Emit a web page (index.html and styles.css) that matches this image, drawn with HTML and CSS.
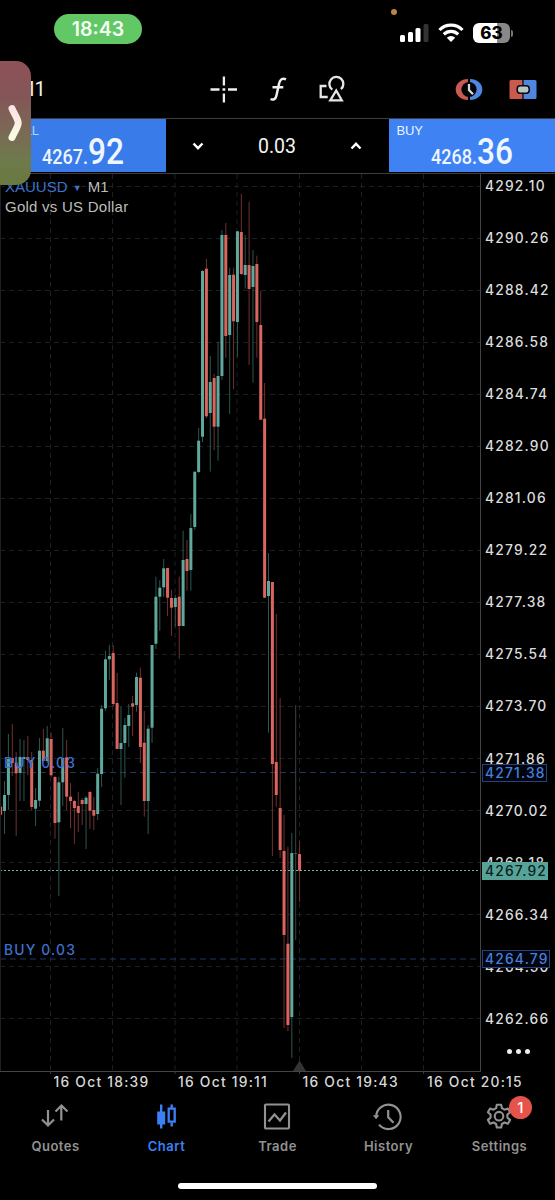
FILE: index.html
```html
<!DOCTYPE html>
<html lang="en">
<head>
<meta charset="utf-8">
<title>XAUUSD Chart</title>
<link rel="stylesheet" href="styles.css">
</head>
<body>
<div class="app">
  <header class="status">
    <div class="status-time">18:43</div>
    <span class="status-dot"></span>
    <div class="status-icons">
      <svg class="ic-signal" width="29" height="20" viewBox="0 0 29 20"><g fill="#fff"><rect x="0" y="12" width="5" height="7" rx="1.5"/><rect x="8" y="9" width="5" height="10" rx="1.5"/><rect x="15.500" y="5" width="5" height="14" rx="1.500"/></g><rect x="23.500" y="1" width="5" height="18" rx="1.500" fill="#333"/></svg>
      <svg class="ic-wifi" width="26" height="20" viewBox="0 0 26 20"><g fill="none" stroke="#fff" stroke-width="3.200"><path d="M1.500 7A16 16 0 0 1 24.500 7"/><path d="M5.800 11.400A10.200 10.200 0 0 1 20.200 11.400"/></g><path d="M8.800 14.700a6 6 0 0 1 8.400 0L13 19z" fill="#fff"/></svg>
      <div class="battery"><span>63</span></div><i class="battery-tip"></i>
    </div>
  </header>

  <nav class="toolbar">
    <div class="timeframe">M1</div>
    <div class="tools">
      <svg width="54" height="32" viewBox="0 0 54 32"><path d="M13.500 16.500h9M31 16.500h9M26.900 3.500v9M26.900 20.500v9M25.500 16.500h2.800" stroke="#eee" stroke-width="2.300" fill="none"/></svg>
      <svg width="54" height="32" viewBox="0 0 54 32"><path d="M35 6.300c-3.600-1.600-6 .2-6.900 4.200l-2.700 12.200c-.7 3.300-2.900 4.600-5.900 3.500M21.500 14.300h10.800" stroke="#eee" stroke-width="2.500" fill="none"/></svg>
      <svg width="54" height="32" viewBox="0 0 54 32"><g stroke="#e6e6e6" stroke-width="2.300" fill="none"><path d="M21.500 13h-5.800v11h7"/><path d="M27.300 16.600a7 7 0 1 1 8.600-.4"/><path d="M31.200 17.500l-5.900 9.800h11.500z"/></g></svg>
    </div>
    <div class="modes">
      <svg width="54" height="32" viewBox="0 0 54 32"><path d="M26 6C19 6 13.700 10.500 13.700 16.500S19 27 26 27z" fill="#c95a50"/><path d="M28 6c7 0 12.300 4.500 12.300 10.500S35 27 28 27z" fill="#4f86e0"/><circle cx="27" cy="16.500" r="7.600" fill="#030405"/><path d="M27 11v6l4 4.300" fill="none" stroke="#d4dbdd" stroke-width="2.200"/></svg>
      <svg width="54" height="32" viewBox="0 0 54 32"><path d="M26.400 7H15a1.500 1.500 0 0 0-1.500 1.500v16a1.500 1.500 0 0 0 1.500 1.500h11.400z" fill="#c95a50"/><path d="M27.600 7H39a1.500 1.500 0 0 1 1.500 1.500v16a1.500 1.500 0 0 1-1.500 1.500H27.600z" fill="#4f86e0"/><rect x="21.200" y="12.700" width="12" height="7.600" rx="3" fill="#b9c4c5" stroke="#050708" stroke-width="1.500"/></svg>
    </div>
  </nav>

  <section class="trade">
    <div class="side sell"><span class="side-label">SELL</span>
      <svg width="86" height="33" viewBox="0 0 86 33"><text class="price-s" x="0" y="27" textLength="46" lengthAdjust="spacingAndGlyphs">4267.</text><text class="price-l" x="46" y="27" textLength="36" lengthAdjust="spacingAndGlyphs">92</text></svg>
    </div>
    <div class="volume">
      <svg width="14" height="12" viewBox="0 0 14 12"><path d="M2.500 3.500L7 8.200l4.500-4.700" fill="none" stroke="#fff" stroke-width="2.400"/></svg>
      <span>0.03</span>
      <svg width="14" height="12" viewBox="0 0 14 12"><path d="M2.500 8.500L7 3.800l4.500 4.700" fill="none" stroke="#fff" stroke-width="2.400"/></svg>
    </div>
    <div class="side buy"><span class="side-label">BUY</span>
      <svg width="86" height="33" viewBox="0 0 86 33"><text class="price-s" x="0" y="27" textLength="46" lengthAdjust="spacingAndGlyphs">4268.</text><text class="price-l" x="46" y="27" textLength="36" lengthAdjust="spacingAndGlyphs">36</text></svg>
    </div>
  </section>

  <main class="chart">
    <svg class="plot" id="plot" width="481" height="902" viewBox="0 173 481 902"></svg>
    <div class="scale" id="scale"></div>
    <div class="caption"><div><b>XAUUSD <i>▼</i></b> M1</div><div class="caption-name">Gold vs US Dollar</div></div>
    <span class="tag tag-order tag-a">4271.38</span>
    <span class="tag tag-bid">4267.92</span>
    <span class="tag tag-order tag-b">4264.79</span>
    <span class="order order-a">BUY 0.03</span>
    <span class="order order-b">BUY 0.03</span>
    <span class="more"><i></i><i></i><i></i></span>
  </main>

  <div class="times"><span>16 Oct 18:39</span><span>16 Oct 19:11</span><span>16 Oct 19:43</span><span>16 Oct 20:15</span></div>

  <footer class="tabs">
    <div class="tab"><svg width="32" height="32" viewBox="0 0 32 32"><path d="M9 8v15M3 17.500l6 6 6-6M22.300 18.500V4M16.500 9.500l6-6 6 6" fill="none" stroke="currentColor" stroke-width="2.200"/></svg><span>Quotes</span></div>
    <div class="tab active"><svg width="32" height="32" viewBox="0 0 32 32"><path d="M11.200 2.500v24M21.700 2.500v4M21.700 20.500v4" stroke="currentColor" stroke-width="2.400"/><path d="M7.200 9.500h8v13h-8z" fill="currentColor"/><path d="M18.700 6.700h6v13h-6z" fill="none" stroke="currentColor" stroke-width="2.300"/></svg><span>Chart</span></div>
    <div class="tab"><svg width="32" height="32" viewBox="0 0 32 32"><rect x="4" y="2.500" width="24" height="24" rx="1" fill="none" stroke="currentColor" stroke-width="2.100"/><path d="M7.500 19.500l6-7 5.500 6 6-8" fill="none" stroke="currentColor" stroke-width="2.200"/></svg><span>Trade</span></div>
    <div class="tab"><svg width="32" height="32" viewBox="0 0 32 32"><path d="M4.200 15A12.200 12.200 0 1 1 7 22.600" fill="none" stroke="currentColor" stroke-width="2.200"/><path d="M.8 13.200h6.600l-3.300 4z" fill="currentColor"/><path d="M16.200 8v7.200l5.300 5.600" fill="none" stroke="currentColor" stroke-width="2.200"/></svg><span>History</span></div>
    <div class="tab"><svg width="32" height="32" viewBox="0 0 32 32"><g fill="none" stroke="currentColor" stroke-width="2.100" stroke-linejoin="round"><path d="M13.800 2.700h4.400l.7 3.500 2.600 1.500 3.400-1.200 2.200 3.800-2.700 2.300v3l2.700 2.300-2.200 3.800-3.400-1.200-2.600 1.500-.7 3.500h-4.400l-.7-3.500-2.600-1.500-3.400 1.200-2.200-3.800 2.700-2.300v-3l-2.700-2.300 2.200-3.800 3.400 1.200 2.600-1.500z"/><circle cx="16" cy="14.200" r="4.300"/></g></svg><span>Settings</span><em class="badge">1</em></div>
  </footer>
  <div class="home"></div>

  <aside class="handle"><svg width="16" height="38" viewBox="0 0 16 38"><defs><linearGradient id="hg" x1="0" y1="0" x2="0" y2="1"><stop offset="0" stop-color="#fbe3e6"/><stop offset="1" stop-color="#fafbe4"/></linearGradient></defs><path d="M5 4.500C6.700 9 11.200 15 11.200 19S6.700 29 5 33.500" fill="none" stroke="url(#hg)" stroke-width="7" stroke-linecap="round"/></svg></aside>
</div>
<script src="app.js"></script>
</body>
</html>
```

FILE: styles.css
```css
* { box-sizing: border-box; }
body { margin: 0; background: #000; color: #ddd; font-family: Inter, "Liberation Sans", sans-serif; }
svg { display: block; flex: none; }
.app { position: relative; width: 555px; height: 1200px; overflow: hidden; background: #000; display: flex; flex-direction: column; }

.status { position: relative; height: 60px; display: flex; justify-content: space-between; align-items: flex-start; padding: 14px 42px 0 54px; }
.status-time { width: 88px; height: 30px; border-radius: 15px; background: #62c866; color: #f4fff4; font-size: 19.500px; font-weight: 600; line-height: 31px; text-align: center; }
.status-dot { position: absolute; left: 391px; top: 9px; width: 6px; height: 6px; border-radius: 50%; background: #b98542; }
.status-icons { display: flex; align-items: center; padding-top: 9px; }
.ic-wifi { margin-left: 9px; }
.battery { width: 37px; height: 20px; margin-left: 9px; border-radius: 6px; background: linear-gradient(90deg, #fff 65%, #888 65%); color: #000; font-size: 17px; font-weight: 800; line-height: 20px; text-align: center; }
.battery-tip { width: 2px; height: 7px; margin-left: 1px; border-radius: 0 2px 2px 0; background: #777; }

.toolbar { height: 58px; display: grid; grid-template-columns: 196.5px 1fr auto; align-items: center; padding: 0 5.500px 0 0; }
.timeframe { padding-left: 17px; color: #eee; font-size: 20px; line-height: 24px; font-family: Roboto, sans-serif; }
.tools, .modes { display: flex; }

.trade { height: 56px; display: grid; grid-template: 53px / 166px 1fr 166px; border-top: 1px solid #3d3d3d; border-bottom: 1px solid #3d3d3d; }
.side { display: flex; flex-direction: column; padding: 5px 0 0 7.500px; color: #eaf3ff; background: #3f82f4; }
.sell { background: #397be9; }
.side-label { height: 14px; font-family: "Liberation Sans", sans-serif; font-size: 13px; line-height: 14px; letter-spacing: -.1px; }
.side svg { margin: -1px 0 0 34px; overflow: visible; }
.sell .side-label { color: #b7d2fc; }
.price-s { font: 500 20px Roboto, sans-serif; fill: #eef6ff; }
.price-l { font: 500 36.500px Roboto, sans-serif; fill: #eef6ff; }
.volume { display: flex; align-items: center; justify-content: space-between; padding: 1px 26px 0 25px; color: #f4f4f4; font: 19.500px Roboto, sans-serif; }

.chart { position: relative; height: 899px; display: flex; }
.plot { margin-top: -1px; }
.scale { width: 74px; padding: 13px 0 0 4px; margin-top: -27px; font-size: 13.800px; letter-spacing: 1.200px; color: #dcdcdc; font-weight: 500; }
.scale div { height: 52.060px; display: flex; align-items: center; }
.caption { position: absolute; left: 5px; top: 3px; font: 15px/19px "Liberation Sans", sans-serif; color: #bdbdbd; }
.caption b { font-weight: 400; color: #3d73cc; }
.caption i { font-style: normal; font-size: 9px; vertical-align: 1px; margin: 0 2px 0 1px; }
.caption-name { margin-top: -1px; letter-spacing: .25px; }
.tag { position: absolute; left: 482px; height: 18px; padding: 0 1px 0 3px; font-size: 13.800px; font-weight: 500; line-height: 18px; letter-spacing: 1.200px; }
.tag-order { border: 1px solid #24427e; background: #02050d; color: #4580df; line-height: 17px; padding: 0 0 0 2px; }
.tag-bid { top: 687.500px; background: #58a398; color: #06221e; }
.tag-a { top: 590px; }
.tag-b { top: 776px; }
.order { position: absolute; left: 4px; color: #3c71cf; font-size: 13.800px; font-weight: 500; line-height: 16px; letter-spacing: 1.200px; }
.order-a { top: 581px; }
.order-b { top: 768px; }
.more { position: absolute; left: 507px; top: 875px; display: flex; gap: 4px; }
.more i { width: 5px; height: 5px; border-radius: 50%; background: #eee; }

.times { height: 20px; display: grid; grid-template-columns: repeat(4, 124.500px); padding: 1px 0 0 53.500px; font-size: 13.800px; font-weight: 500; line-height: 16px; letter-spacing: 1.250px; color: #d8d8d8; white-space: nowrap; }

.tabs { height: 83px; display: grid; grid-template-columns: repeat(5, 1fr); padding-top: 9px; }
.tab { position: relative; display: flex; flex-direction: column; align-items: center; color: #929292; font-size: 13px; font-weight: 600; line-height: 16px; letter-spacing: .5px; }
.tab svg { margin-right: 1px; }
.tab span { margin-top: 4px; }
.active { color: #3b80f6; }
.badge { position: absolute; left: 65px; top: -6px; width: 23px; height: 23px; border-radius: 50%; background: #e6534b; color: #fff; font: 500 15px/23px Inter, sans-serif; text-align: center; }
.home { width: 199px; height: 6px; margin: 7px auto 0; border-radius: 3px; background: #fff; }
.handle { position: absolute; left: 0; top: 61px; width: 31px; height: 124px; border-radius: 0 15px 15px 0; background: linear-gradient(#8e5157, #845657 30%, #7b6855 55%, #6e7a4c 80%, #69793f); display: flex; align-items: center; padding-left: 7px; }
```

FILE: app.js
```js
// Each candle: [direction, high, bodyTop, bodyBottom, low] in chart coordinates.
const candles = [
  ['r',803,806.7,814.7,816],['g',781,795,811,834],['g',734,759,795,810],['r',724,758,763,776],
  ['r',752,762.7,773.3,836],['g',739,757,773,801],['g',740,757,759,801],['r',736,757,760,775],
  ['r',752,760,807,810],['g',788,800,808.7,826],['g',738,750.7,800.7,806.7],['r',729,750.7,761,763],
  ['g',726,738.3,761,763],['r',733,739,775.3,777],['r',776,777,823,838.7],['g',776.7,782.3,822.3,896],
  ['g',728,758,782.3,806],['r',740,757.3,796.7,810],['r',783,796.7,801,828],['r',800,801,808,844],
  ['r',792,806,813,832],['r',798,800,804,825],['g',796,797.7,804,849],['r',791,792,810.7,829],
  ['r',797,810,815.7,830],['g',768,773.7,814,820],['g',705,708.7,774,787],['g',650.7,659.3,708.3,711],
  ['g',645,656,659.3,680],['r',645,653,704,706.7],['r',673,703,749,749],['g',706.7,743,749,805],
  ['g',718,725,743,777.7],['g',704,715,726,747],['r',696,703.3,706.7,736],['g',672.7,677,705,711.7],
  ['r',667.7,677.7,747,763],['r',711,742.7,801,816.7],['g',725,728.7,801,834],['g',645,645,727.7,743],
  ['g',576.7,596.7,643.7,649],['g',580,587.7,596.7,630.7],['g',559,568.3,587.3,597],['r',568,568,597.7,616],
  ['r',590,598,607.7,636],['g',594.7,598,607,626.7],['r',576.7,596.7,626,658.7],['g',530.7,560,626,626],
  ['r',540,559,571,590.7],['g',514,528,570,590.7],['g',471.7,471.7,527,530],['g',428,440.7,472,473],
  ['g',270,271,436.7,442],['r',259,268.7,416.3,418],['g',356,382,413,471.7],['r',374,378,426.7,450],
  ['g',341.7,376,426.7,460.7],['g',230,235,376,380],['r',223,235,336,358],['g',267.7,275,335,414],
  ['r',267.7,274.7,321.3,389],['g',231,231.3,322,357],['r',193.7,232,274,275],['g',235,265,275,288.7],
  ['r',201.7,265,289,365],['g',250,266,287,382.7],['r',255.7,264,322,357.7],['r',291,325,419.7,420],
  ['r',383,418.7,597.7,598],['g',553,581,596,732.7],['r',582,582,764,856],['r',614,762,795,806.7],
  ['r',698,808,850,858],['r',815,851,935,1028],['r',846.7,943.7,1025,1031],['g',833,853,1017,1058],
  ['n',705,853,854,940],['r',841,854,870.7,902]
];
const colors = { r: ['#d9655f', '#71302e'], g: ['#60a89c', '#2c5650'], n: ['#3d5a53', '#38453f'] };
const line = (x1, y1, x2, y2, s, dash, w = 1) =>
  `<line x1="${x1}" y1="${y1}" x2="${x2}" y2="${y2}" stroke="${s}" stroke-width="${w}"${dash ? ` stroke-dasharray="${dash}"` : ''}/>`;

let out = '';
[50.5, 112.5, 175, 237, 299.5, 361.5, 423.5].forEach((x, i) => {
  out += line(x, 174, x, 1071, '#1d1f21', '5 4');
  if (i % 2 === 0) out += line(x, 1071, x, 1074, '#3a3a3a');
});
for (let k = 0; k < 17; k++) {
  const y = Math.floor(186 + k * 52.06) + 0.5;
  out += line(0, y, 480, y, '#1d1f21', '5 4');
}
out += line(0, 772.5, 480, 772.5, '#1f3664', '6 4') + line(0, 959, 480, 959, '#1f3664', '6 4');
candles.forEach(([d, hi, top, bot, lo], i) => {
  const x = 0.65 + i * 3.882;
  out += line(x, hi, x, lo, colors[d][1]);
  out += `<rect x="${x - 1.5}" y="${top}" width="3" height="${bot - top}" fill="${colors[d][0]}"/>`;
});
out += line(0, 870.5, 480, 870.5, '#75b5a7', '2 2', 1.2);
out += '<path d="M293 1071l6.500-10.500 6.500 10.500z" fill="#343434"/>';
out += line(0.5, 174, 0.5, 1071, '#202020') + line(0, 1071.5, 481, 1071.5, '#444') + line(480.5, 174, 480.5, 1072, '#444');
document.getElementById('plot').innerHTML = out;

document.getElementById('scale').innerHTML = Array.from({ length: 17 }, (_, k) =>
  `<div>${(4292.1 - k * 1.84).toFixed(2)}</div>`).join('');
```
